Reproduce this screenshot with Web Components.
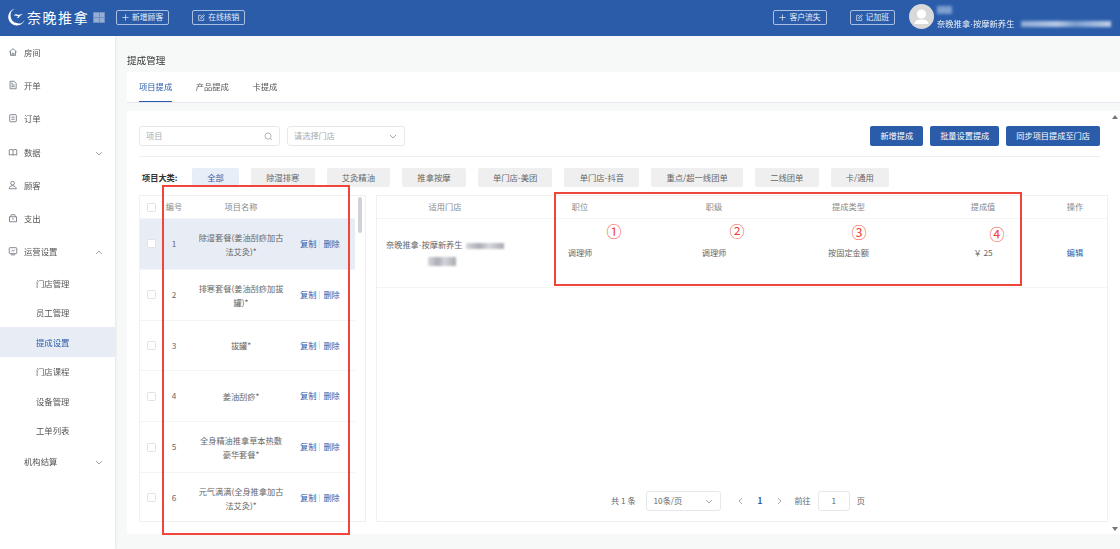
<!DOCTYPE html>
<html lang="zh"><head><meta charset="utf-8"><title>提成管理</title>
<style>
html,body{margin:0;padding:0;height:549px;overflow:hidden;background:#f7f9f9}
body{font:8.2px/1.2 "Noto Sans CJK SC","Liberation Sans",sans-serif;color:#666}
</style></head><body>
<app-shell></app-shell>
<script>
const BLUE='#2a5caa';
const DOT='<span style="font-family:\'Liberation Sans\',sans-serif">·</span>';
function def(name,css,html,extra){
  const t=document.createElement('template');
  t.innerHTML=`<style>${css}</style>${html}`;
  customElements.define(name,class extends HTMLElement{
    constructor(){super();this.attachShadow({mode:'open'}).appendChild(t.content.cloneNode(true));}
    connectedCallback(){if(extra)extra.call(this,this.shadowRoot);}
  });
}
const ICONS={
 home:'<path d="M1.5 6 6 2l4.5 4M3 5.2V10h6V5.2"/><path d="M5 10V7.5h2V10"/>',
 doc:'<path d="M2.5 1.5h5L9.8 4v6.5H2.5z"/><path d="M4 6h4M4 8h4M4 4h2"/>',
 order:'<rect x="2" y="2" width="8" height="8.5" rx="1"/><path d="M4 5h4M4 7.5h4"/>',
 data:'<path d="M1.5 3.5C3 2.8 4.5 2.8 6 3.6c1.5-.8 3-.8 4.5-.1v6.2c-1.5-.7-3-.7-4.5.1-1.5-.8-3-.8-4.5-.1zM6 3.6v6.2"/>',
 user:'<circle cx="5.5" cy="3.8" r="2.2"/><path d="M1.5 10.5c0-2.4 1.8-3.6 4-3.6s4 1.2 4.5 3.6z"/>',
 wallet:'<path d="M1.8 4.5h8.4v6H1.8zM3 4.5 4 2h4l1 2.5M6 6.2v2"/>',
 screen:'<rect x="1.5" y="2" width="9" height="7.2" rx="1"/><path d="M3.5 10.6h5M4 6.6l1.4-1.5 1.2 1 1.6-1.6"/>'
};
const chev=d=>`<svg width="8" height="5" viewBox="0 0 8 5" fill="none" stroke="#8a8f99" stroke-width=".8"><path d="${d==='up'?'M1 4l3-3 3 3':'M1 1l3 3 3-3'}"/></svg>`;

def('head-btn',`:host{display:inline-flex;align-items:center;gap:3px;height:13px;padding:0 5px;border:1px solid #a9c0e3;border-radius:2px;color:#e8eef8;font-size:7.8px;white-space:nowrap}
 svg{display:block}`,`<svg width="7" height="7" viewBox="0 0 8 8" fill="none" stroke="#e8eef8" stroke-width=".8"></svg><slot></slot>`,
 function(r){r.querySelector('svg').innerHTML=this.getAttribute('icon')==='edit'?'<path d="M6.5 4.5v2.8H.7V1.5h3M3 5l.3-1.3L6.5.7l1 1-3.2 3z"/>':'<path d="M4 .5v7M.5 4h7"/>';});

def('app-header',`:host{display:flex;align-items:center;height:36px;box-sizing:border-box;padding-bottom:2px;background:${BLUE};color:#fff;flex:none}
 .logo{display:flex;align-items:center;margin-left:7px;width:109px;flex:none}
 svg.m{flex:none}
 .name{font-size:14px;font-weight:400;letter-spacing:1.55px;margin-left:2px;white-space:nowrap}
 .seal{width:12px;height:11px;margin-left:4px;background:#6f8fc4;flex:none;display:grid;grid-template:1fr 1fr/1fr 1fr;gap:1px;padding:1px;box-sizing:border-box}
 .seal i{background:#94aed6}
 .left{display:flex;gap:23px}
 .sp{flex:1}
 .right{display:flex;gap:23px;margin-right:14px}
 .who{width:211px;height:34px;display:flex;align-items:flex-start;flex:none}
 .av{width:25px;height:25px;border-radius:50%;background:#d9d9d9;margin-top:4px;flex:none;overflow:hidden}
 .txt{margin:6px 0 0 3px;display:flex;flex-direction:column;gap:5px;font-size:8.3px}
 .nm{width:15px;height:8px;background:#7f9fd0;filter:blur(1.5px)}
 .ln{display:flex;align-items:center;gap:7px;white-space:nowrap;color:#eef2f9}
 .bl{width:90px;height:6px;background:linear-gradient(90deg,#8eaad6,#b9cbe6 40%,#7f9fd0 60%,#c3d2ea);filter:blur(1.6px)}`,
`<div class="logo"><svg class="m" width="18" height="18" viewBox="0 0 20 20" fill="#fff"><path d="M8.5 .8A9.4 9.4 0 1 0 19.6 13.2 8 8 0 0 1 10.5 16.8 8.2 8.2 0 0 1 4 8.6 8 8 0 0 1 8.5 .8z"/><path d="M7.5 8.5c1.7-2.2 3.5-2 5-.7l5.2-1.5-3.7 2.8c-.3 1.7-2 2.6-3.7 1.7 1.1 0 2-.5 2.2-1.4-1.5-1-3.3-1.4-5-.9z"/></svg><span class="name">奈晚推拿</span><span class="seal"><i></i><i></i><i></i><i></i></span></div>
 <div class="left"><head-btn>新增顾客</head-btn><head-btn icon="edit">在线核销</head-btn></div>
 <div class="sp"></div>
 <div class="right"><head-btn>客户流失</head-btn><head-btn icon="edit">记加班</head-btn></div>
 <div class="who"><div class="av"><svg width="25" height="25" viewBox="0 0 25 25" fill="#fff"><circle cx="12.5" cy="10" r="4.6"/><path d="M5.5 20c0-3.6 3.5-4.4 7-4.4s7 .8 7 4.4z"/></svg></div>
 <div class="txt"><div class="nm"></div><div class="ln"><span>奈晚推拿${DOT}按摩新养生</span><span class="bl"></span></div></div></div>`);

def('nav-item',`:host{display:flex;align-items:center;height:33.2px;box-sizing:border-box;padding:0 12px 1px 8px;color:#555;font-size:8.4px;white-space:nowrap}
 svg.i{width:10px;height:10px;margin-right:6px;flex:none}
 .t{flex:1}:host([noicon]) .t{margin-left:16px}`,
 `<svg class="i" viewBox="0 0 12 12" fill="none" stroke="#5d6470" stroke-width=".9"></svg><span class="t"><slot></slot></span><span class="c"></span>`,
 function(r){const ic=this.getAttribute('icon');const s=r.querySelector('svg.i');if(ic)s.innerHTML=ICONS[ic];else s.remove();
  const c=this.getAttribute('chev');if(c)r.querySelector('.c').innerHTML=chev(c);});
def('nav-sub',`:host{display:flex;align-items:center;height:29.5px;box-sizing:border-box;padding:0 0 1px 36px;color:#555;font-size:8.4px;white-space:nowrap}
 :host([active]){background:#e8edf5;color:${BLUE}}`,`<slot></slot>`);
def('side-nav',`:host{display:block;width:115px;flex:none;background:#fff;box-shadow:1px 0 2px rgba(0,0,0,.08);position:relative;z-index:1}`,
`<nav-item icon="home">房间</nav-item><nav-item icon="doc">开单</nav-item><nav-item icon="order">订单</nav-item>
 <nav-item icon="data" chev="down">数据</nav-item><nav-item icon="user">顾客</nav-item><nav-item icon="wallet">支出</nav-item>
 <nav-item icon="screen" chev="up">运营设置</nav-item>
 <nav-sub>门店管理</nav-sub><nav-sub>员工管理</nav-sub><nav-sub active>提成设置</nav-sub><nav-sub>门店课程</nav-sub><nav-sub>设备管理</nav-sub><nav-sub>工单列表</nav-sub>
 <nav-item noicon chev="down">机构结算</nav-item>`);

def('page-tabs',`:host{display:flex;height:30px;background:#fff;border-bottom:1px solid #e4e7ed;padding-left:12px;gap:23.5px;color:#555}
 span{display:flex;align-items:center;height:30px;box-sizing:border-box;font-size:8.3px}
 .on{color:${BLUE};border-bottom:1.5px solid ${BLUE}}`,
 `<span class="on">项目提成</span><span>产品提成</span><span>卡提成</span>`);

def('ui-field',`:host{display:flex;align-items:center;justify-content:space-between;height:20px;box-sizing:border-box;border:1px solid #e6e8ec;border-radius:3px;padding:0 6px;color:#aaa;background:#fff;font-size:8.2px;white-space:nowrap}`,
 `<slot></slot><slot name="end"></slot>`);
def('ui-btn',`:host{display:flex;align-items:center;height:20px;padding:0 10px;background:${BLUE};color:#fff;border-radius:2px;font-size:8.2px;white-space:nowrap}`,`<slot></slot>`);

def('filter-bar',`:host{display:flex;align-items:center;height:20px;padding-bottom:10px;margin-right:8px;border-bottom:1px solid #eceef1}
 .sp{flex:1}.g{display:flex;gap:7px}ui-field+ui-field{margin-left:7px}`,
 `<ui-field style="width:141px">项目<svg slot="end" width="9" height="9" viewBox="0 0 10 10" fill="none" stroke="#999" stroke-width=".8"><circle cx="4.5" cy="4.5" r="3.4"/><path d="M7 7l2 2"/></svg></ui-field>
 <ui-field style="width:118px">请选择门店<span slot="end" style="margin-right:1px">${chev('down')}</span></ui-field>
 <div class="sp"></div><div class="g"><ui-btn>新增提成</ui-btn><ui-btn>批量设置提成</ui-btn><ui-btn>同步项目提成至门店</ui-btn></div>`);

def('cat-chip',`:host{display:flex;align-items:center;height:19px;padding:0 15.2px;background:#efefef;border-radius:2px;color:#666;font-size:8.3px;white-space:nowrap}
 :host([on]){background:#e8eef7;color:${BLUE}}`,`<slot></slot>`);
def('cat-row',`:host{display:flex;align-items:center;gap:12px;height:19px;margin-top:11px;padding-left:3px}
 b{font-weight:700;color:#333;width:38px;flex:none;white-space:nowrap;font-size:8.2px}`,
 `<b>项目大类:</b><cat-chip on>全部</cat-chip><cat-chip>除湿排寒</cat-chip><cat-chip>艾灸精油</cat-chip><cat-chip>推拿按摩</cat-chip><cat-chip>单门店-美团</cat-chip><cat-chip>单门店-抖音</cat-chip><cat-chip>重点/超一线团单</cat-chip><cat-chip>二线团单</cat-chip><cat-chip>卡/通用</cat-chip>`);

const ROWCSS=`display:grid;grid-template-columns:24px 20px 114px 50px 1fr;align-items:center;`;
def('ui-check',`:host{display:block;box-sizing:border-box;width:9px;height:9px;border:1px solid #dfe2e6;border-radius:1.5px;background:#fff;margin-left:7px}`,``);
def('proj-row',`:host{${ROWCSS}height:50.8px;box-sizing:border-box;border-bottom:1px solid #f3f4f6;color:#666;font-size:8.2px}
 :host([on]){background:#e8edf5}
 .no{text-align:center}.nm{text-align:center;line-height:14px;padding:0 13px}
 .op{display:flex;align-items:center;color:${BLUE};white-space:nowrap;margin-left:2px}
 .op i{width:1px;height:8px;background:#dde1e7;margin:0 3px}`,
 `<ui-check></ui-check><span class="no"></span><span class="nm"><slot></slot></span><span class="op">复制<i></i>删除</span><span></span>`,
 function(r){r.querySelector('.no').textContent=this.getAttribute('no');});
def('project-table',`:host{display:block;position:relative;width:227px;height:327px;box-sizing:border-box;border:1px solid #eff0f2;padding-right:10px;flex:none;overflow:hidden}
 .h{${ROWCSS}height:23px;box-sizing:border-box;color:#888;border-bottom:1px solid #f3f4f6;font-size:8.2px}
 .h span{text-align:center}
 .bar{position:absolute;right:3px;top:1px;width:4px;height:36px;background:#cfd2d6;border-radius:2px}`,
 `<div class="h"><ui-check></ui-check><span>编号</span><span>项目名称</span></div>
 <proj-row no="1" on>除湿套餐(姜油刮痧加古法艾灸)*</proj-row><proj-row no="2">排寒套餐(姜油刮痧加拔罐)*</proj-row><proj-row no="3">拔罐*</proj-row><proj-row no="4">姜油刮痧*</proj-row><proj-row no="5">全身精油推拿草本热敷豪华套餐*</proj-row><proj-row no="6">元气满满(全身推拿加古法艾灸)*</proj-row>
 <div class="bar"></div>`);

def('ui-pager',`:host{display:flex;align-items:center;justify-content:center;height:20px;margin-bottom:10px;padding-right:8px;color:#666;font-size:8.2px;white-space:nowrap}
 .sel{display:flex;align-items:center;justify-content:space-between;width:75px;height:20px;box-sizing:border-box;border:1px solid #e6e8ec;border-radius:3px;padding:0 7px;margin:0 17px 0 10px}
 .pg{color:${BLUE};font-weight:700;margin:0 15px}
 .go{width:32px;height:20px;box-sizing:border-box;border:1px solid #e6e8ec;border-radius:3px;display:flex;align-items:center;justify-content:center;margin:0 7px}
 svg{display:block}`,
 `<span>共 1 条</span><span class="sel">10条/页${chev('down')}</span><svg width="5" height="8" viewBox="0 0 5 8" fill="none" stroke="#999" stroke-width=".8"><path d="M4 1 1 4l3 3"/></svg><span class="pg">1</span><svg width="5" height="8" viewBox="0 0 5 8" fill="none" stroke="#999" stroke-width=".8"><path d="M1 1l3 3-3 3"/></svg><span style="margin-left:12px">前往</span><span class="go">1</span><span>页</span>`);

const RC=`grid-template-columns:136px 134px 134px 135px 134px 1fr;`;
def('commission-table',`:host{display:flex;flex-direction:column;width:732px;height:327px;box-sizing:border-box;border:1px solid #eff0f2;flex:none}
 .r{display:grid;${RC}align-items:center;text-align:center;box-sizing:border-box;border-bottom:1px solid #f3f4f6}
 .h{height:23px;color:#888}.b{height:69px;color:#666}
 .r>:last-child{padding-right:7px}
 .st{display:flex;flex-direction:column;gap:6px;align-items:flex-start;padding-left:9px;white-space:nowrap;box-sizing:border-box}
 .st div{display:flex;align-items:center;gap:4px}
 .bl{display:inline-block;height:6px;background:linear-gradient(90deg,#d8d8dc,#a9acb5 35%,#d5d6da 60%,#a8aab2);filter:blur(1px)}
 a{color:${BLUE}}.sp{flex:1}`,
 `<div class="r h"><span>适用门店</span><span>职位</span><span>职级</span><span>提成类型</span><span>提成值</span><span>操作</span></div>
 <div class="r b"><span class="st"><div><span>奈晚推拿${DOT}按摩新养生</span><i class="bl" style="width:38px"></i></div><i class="bl" style="width:28px;height:9px;margin-left:42px"></i></span><span>调理师</span><span>调理师</span><span>按固定金额</span><span>￥ 25</span><a>编辑</a></div>
 <div class="sp"></div><ui-pager></ui-pager>`);

def('red-marks',`:host{position:absolute;inset:0;pointer-events:none;display:block;z-index:5}
 .box{position:absolute;box-sizing:border-box;border:2px solid #f0453a}
 .n{position:absolute;color:#f0453a;font:15px/15px "Noto Sans CJK SC",sans-serif;transform:translate(-50%,-50%)}`,
 `<div class="box" style="left:162px;top:185px;width:188px;height:350px"></div>
 <div class="box" style="left:554px;top:192px;width:468px;height:94px"></div>
 <span class="n" style="left:614px;top:230px">①</span><span class="n" style="left:737px;top:230px">②</span><span class="n" style="left:859px;top:231px">③</span><span class="n" style="left:997px;top:233px">④</span>`);

def('page-card',`:host{display:block;position:relative;background:#fff;height:423px;box-sizing:border-box;padding:15px 12px 0}
 .tb{display:flex;justify-content:space-between;margin-top:8px}
 .ar{position:absolute;right:2px;width:0;height:0;border-left:3px solid transparent;border-right:3px solid transparent}`,
 `<filter-bar></filter-bar><cat-row></cat-row><div class="tb"><project-table></project-table><commission-table></commission-table></div>
 <i class="ar" style="top:4px;border-bottom:4px solid #777"></i><i class="ar" style="bottom:3px;border-top:4px solid #777"></i>`);

def('app-shell',`:host{display:flex;flex-direction:column;position:relative;width:1120px;height:549px;overflow:hidden;filter:blur(.4px)}
 .body{display:flex;flex:1;min-height:0}
 main{flex:1;min-width:0;padding-left:12px}
 h1{margin:0;height:36px;box-sizing:border-box;padding-top:17px;font:400 9.6px/14px "Noto Sans CJK SC",sans-serif;color:#333}
 .gap{height:8px}`,
 `<app-header></app-header><div class="body"><side-nav></side-nav><main><h1>提成管理</h1><page-tabs></page-tabs><div class="gap"></div><page-card></page-card></main></div><red-marks></red-marks>`);
</script>
</body></html>
